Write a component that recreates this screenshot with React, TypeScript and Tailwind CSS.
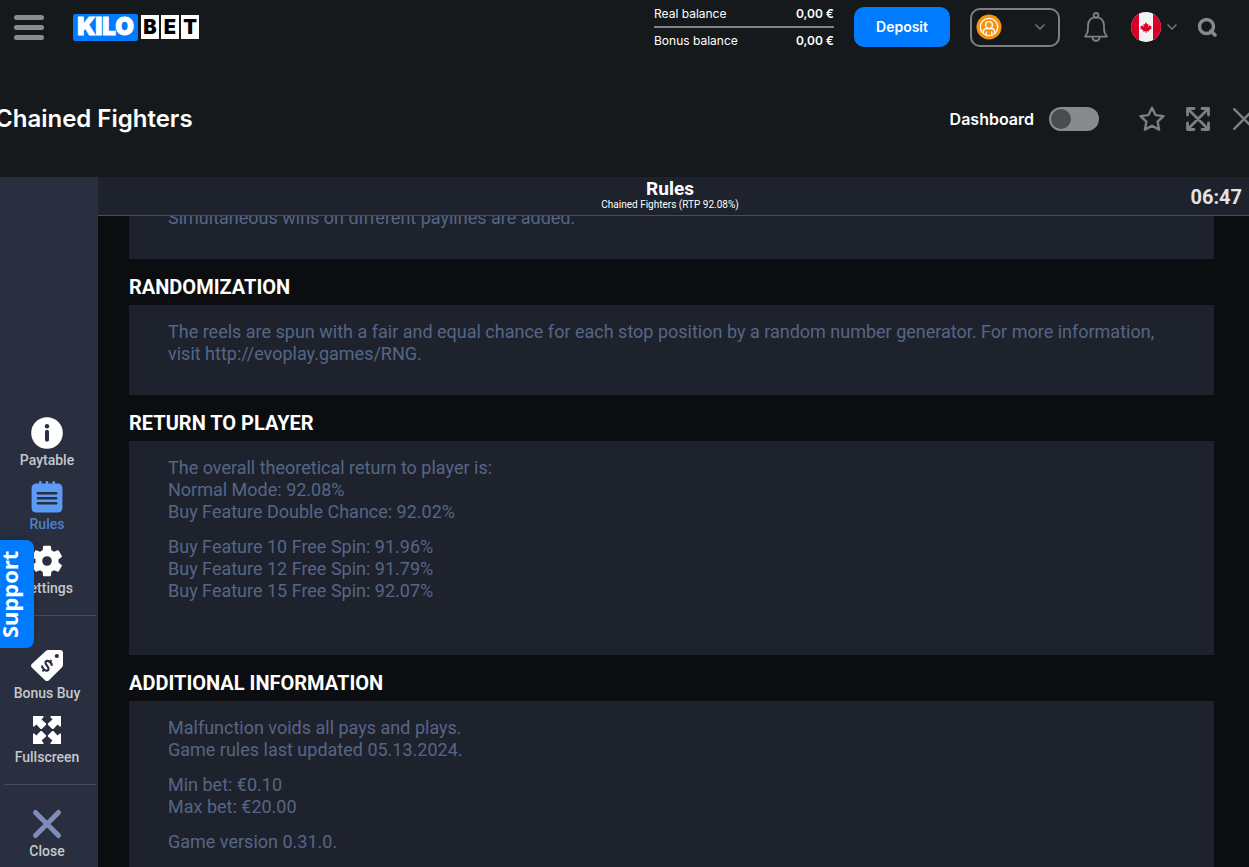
import { useState } from 'react';
import { ChevronDown } from 'lucide-react';

interface RuleSection {
  title: string;
  paragraphs: string[][];
  roomy?: boolean;
}

const SECTIONS: RuleSection[] = [
  {
    title: 'RANDOMIZATION',
    paragraphs: [
      [
        'The reels are spun with a fair and equal chance for each stop position by a random number generator. For more information,',
        'visit http://evoplay.games/RNG.',
      ],
    ],
  },
  {
    title: 'RETURN TO PLAYER',
    paragraphs: [
      [
        'The overall theoretical return to player is:',
        'Normal Mode: 92.08%',
        'Buy Feature Double Chance: 92.02%',
      ],
      [
        'Buy Feature 10 Free Spin: 91.96%',
        'Buy Feature 12 Free Spin: 91.79%',
        'Buy Feature 15 Free Spin: 92.07%',
      ],
    ],
    roomy: true,
  },
  {
    title: 'ADDITIONAL INFORMATION',
    paragraphs: [
      ['Malfunction voids all pays and plays.', 'Game rules last updated 05.13.2024.'],
      ['Min bet: €0.10', 'Max bet: €20.00'],
      ['Game version 0.31.0.'],
    ],
  },
];

function Logo() {
  return (
    <a href="#" aria-label="Kilobet" className="flex items-center gap-[3px] leading-none font-black">
      <span className="flex h-[27px] w-[65px] items-center justify-center rounded-[2px] bg-[#007bff] text-2xl leading-none text-white [-webkit-text-stroke:1px_white]">
        KILO
      </span>
      <span className="flex gap-[2px] text-xl leading-none text-black">
        {['B', 'E', 'T'].map(letter => (
          <span key={letter} className="flex h-6 w-[18px] items-center justify-center bg-white">
            {letter}
          </span>
        ))}
      </span>
    </a>
  );
}

function BellIcon() {
  return (
    <svg viewBox="0 0 24 30" className="h-[30px] w-6" fill="none" stroke="#7c8083" strokeWidth="1.8">
      <circle cx="12" cy="3.4" r="2.4" />
      <path d="M1 24.6c2-2.2 3-4.600 3-8V13.500c0-5 3.300-8.300 8-8.300s8 3.300 8 8.300v3.100c0 3.400 1 5.800 3 8z" strokeLinejoin="round" />
      <path d="M8.200 25c.4 2.500 1.800 3.800 3.800 3.800s3.400-1.300 3.800-3.800" />
    </svg>
  );
}

function UserIcon() {
  return (
    <svg viewBox="0 0 26 26" className="h-[26px] w-[26px]" fill="none" stroke="#fff" strokeWidth="1.3">
      <circle cx="13" cy="13" r="12.500" fill="#f7930f" stroke="none" />
      <circle cx="13" cy="13" r="8.700" />
      <circle cx="13" cy="11" r="3.400" />
      <path d="M7.300 19.300v-1.200c0-2 1.400-3.500 3.400-3.500h4.600c2 0 3.400 1.500 3.400 3.500v1.200M10.200 17.500v3.600M15.800 17.500v3.600" />
    </svg>
  );
}

function CanadaFlag() {
  return (
    <svg viewBox="0 0 30 30" className="h-[30px] w-[30px] rounded-full">
      <rect width="30" height="30" fill="#f2f2f2" />
      <rect width="8" height="30" fill="#d80027" />
      <rect x="22" width="8" height="30" fill="#d80027" />
      <path
        fill="#d80027"
        d="M15 10l1.300 2.400 1.300-.6-.5 3 1.800-1.600.4 1.100 1.400-.2-.7 1.600.9.600-3.200 2.200.3 1.100-2.600-.3V21h-.8v-1.700l-2.600.3.300-1.100-3.200-2.200.9-.6-.7-1.600 1.400.2.400-1.100 1.800 1.600-.5-3 1.300.6z"
      />
    </svg>
  );
}

function SearchIcon() {
  return (
    <svg viewBox="0 0 20 20" className="h-5 w-5" fill="none" stroke="#878a8d">
      <circle cx="9.500" cy="9.500" r="7" strokeWidth="3.400" />
      <path d="M14 14l4 4" strokeWidth="3.600" strokeLinecap="round" />
    </svg>
  );
}

function TopBar() {
  return (
    <header className="flex h-[54px] items-center justify-between pr-8 pl-[14px]">
      <div className="flex items-center gap-[29px]">
        <button type="button" aria-label="Menu" className="flex w-[30px] flex-col gap-[5px]">
          <span className="h-[5px] rounded-full bg-[#8a8c8f]" />
          <span className="h-[5px] rounded-full bg-[#8a8c8f]" />
          <span className="h-[5px] rounded-full bg-[#8a8c8f]" />
        </button>
        <Logo />
      </div>

      <div className="flex items-center">
        <dl className="w-[180px] pt-[2px] text-xs text-white">
          <div className="flex h-[26px] items-center justify-between border-b-2 border-[#7f8285]">
            <dt>Real balance</dt>
            <dd className="font-semibold">0,00 €</dd>
          </div>
          <div className="flex h-[26px] items-center justify-between">
            <dt>Bonus balance</dt>
            <dd className="font-semibold">0,00 €</dd>
          </div>
        </dl>
        <button type="button" className="ml-5 h-10 w-24 rounded-[10px] bg-[#007bff] text-sm font-semibold text-white">
          Deposit
        </button>
        <button
          type="button"
          aria-label="Account"
          className="ml-5 flex h-[39px] w-[90px] items-center justify-between rounded-[10px] border-2 border-[#7c8083] pr-[10px] pl-1"
        >
          <UserIcon />
          <ChevronDown className="h-4 w-4 text-[#6d7279]" strokeWidth={2.5} />
        </button>
        <button type="button" aria-label="Notifications" className="ml-6">
          <BellIcon />
        </button>
        <button type="button" aria-label="Language" className="ml-[23px] flex items-center gap-[3px]">
          <CanadaFlag />
          <ChevronDown className="h-4 w-4 text-[#6d7279]" strokeWidth={2.5} />
        </button>
        <button type="button" aria-label="Search" className="ml-[17px]">
          <SearchIcon />
        </button>
      </div>
    </header>
  );
}

function TitleBar() {
  const [dashboard, setDashboard] = useState(false);

  return (
    <div className="-mr-[6px] -ml-[5px] flex h-[123px] items-center justify-between pt-[7px]">
      <h1 className="text-2xl font-semibold text-white">Chained Fighters</h1>
      <div className="flex items-center text-[#7c8083]">
        <label className="flex cursor-pointer items-center gap-[15px] text-base font-semibold text-white">
          Dashboard
          <input
            type="checkbox"
            checked={dashboard}
            onChange={e => setDashboard(e.target.checked)}
            className="peer sr-only"
          />
          <span className="flex h-6 w-[50px] items-center rounded-full bg-[#888a8e] p-[2px] peer-checked:justify-end">
            <span className="h-5 w-5 rounded-full bg-[#4a4c50]" />
          </span>
        </label>
        <button type="button" aria-label="Favourite" className="ml-10">
          <svg viewBox="0 0 26 26" className="h-[26px] w-[26px]" fill="none" stroke="currentColor" strokeWidth="2.400" strokeLinejoin="round">
            <path d="M13 1.800l3.500 7.300 8 1-5.900 5.500 1.500 8L13 19.700l-7.100 3.900 1.500-8L1.500 10.100l8-1z" />
          </svg>
        </button>
        <button type="button" aria-label="Expand" className="ml-[21px]">
          <svg viewBox="0 0 24 24" className="h-6 w-6" fill="none" stroke="currentColor" strokeWidth="2.800" strokeLinecap="round" strokeLinejoin="round">
            <path d="M8 1.500H1.500V8M16 1.500h6.500V8M8 22.500H1.500V16M16 22.500h6.500V16M2 2l20 20M22 2L2 22" />
          </svg>
        </button>
        <button type="button" aria-label="Close game" className="ml-[23px]">
          <svg viewBox="0 0 22 22" className="h-[22px] w-[22px]" fill="none" stroke="currentColor" strokeWidth="2.400" strokeLinecap="round">
            <path d="M1.200 1.200l19.600 19.600M20.800 1.200L1.200 20.800" />
          </svg>
        </button>
      </div>
    </div>
  );
}

function InfoIcon() {
  return (
    <svg viewBox="0 0 32 32" className="h-8 w-8">
      <circle cx="16" cy="16" r="15.800" fill="#fff" />
      <circle cx="16" cy="9.300" r="2.200" fill="#292f3e" />
      <path d="M16 14.800v8" stroke="#292f3e" strokeWidth="4" strokeLinecap="round" />
    </svg>
  );
}

function RulesIcon() {
  return (
    <svg viewBox="0 0 32 32" className="h-8 w-8">
      <rect x=".6" y="2.500" width="30.800" height="29" rx="4.500" fill="#5b9bf5" />
      <path d="M9.300 1.300v3M16 1.300v3M22.700 1.300v3" stroke="#5b9bf5" strokeWidth="2.600" strokeLinecap="round" />
      <path d="M6.800 12.300h18.400M6.800 17.300h18.400M6.800 22.300h18.400" stroke="#292f3e" strokeWidth="2.500" strokeLinecap="round" />
    </svg>
  );
}

function GearIcon() {
  return (
    <svg viewBox="2 2 20 20" className="h-8 w-8" fill="#fff">
      <path d="M19.140 12.940c.04-.3.060-.61.060-.94 0-.32-.02-.64-.07-.94l2.030-1.580c.18-.14.230-.41.120-.61l-1.920-3.320c-.12-.22-.37-.29-.59-.22l-2.390.96c-.5-.38-1.030-.7-1.620-.94l-.36-2.540c-.04-.24-.24-.41-.48-.41h-3.840c-.24 0-.43.170-.47.410l-.36 2.540c-.59.240-1.130.570-1.620.940l-2.390-.96c-.22-.08-.47 0-.59.220L2.740 8.870c-.12.210-.08.470.120.610l2.030 1.580c-.05.300-.09.630-.09.940s.02.640.070.940l-2.030 1.580c-.18.140-.23.410-.12.610l1.920 3.320c.12.220.37.290.59.220l2.390-.96c.5.380 1.030.700 1.620.940l.36 2.540c.05.240.24.410.48.410h3.840c.24 0 .44-.17.470-.41l.36-2.540c.59-.24 1.130-.56 1.620-.94l2.390.96c.22.080.47 0 .59-.22l1.920-3.320c.12-.22.070-.47-.12-.61l-2.010-1.580zM12 15a3 3 0 1 1 0-6 3 3 0 0 1 0 6z" />
    </svg>
  );
}

function TagIcon() {
  return (
    <svg viewBox="0 0 32 32" className="h-8 w-8">
      <path fill="#fff" d="M14.500 1.200Q15.700 0 17.500 0H29q3 0 3 3v11.500q0 1.800-1.200 3L18 30.200q-2 1.800-4 0L1 17.800q-2-2 0-4z" />
      <circle cx="25.800" cy="6" r="2.100" fill="#292f3e" />
      <path
        d="M3.600-2.600C3-5.400-3.500-5.500-3.500-2.400-3.500.6 3.600-.6 3.600 2.500 3.600 5.500-3 5.500-3.700 2.700M0-7.200v2.600M0 4.600v2.600"
        transform="translate(16 15.700) rotate(38)"
        fill="none"
        stroke="#292f3e"
        strokeWidth="2.100"
      />
    </svg>
  );
}

function FullscreenIcon() {
  return (
    <svg viewBox="0 0 32 32" className="h-8 w-8" fill="#fff">
      {[0, 90, 180, 270].map(angle => (
        <path key={angle} transform={`rotate(${angle} 16 16)`} d="M2 2h10.500v1.200l-2 2.200 4.600 4.200v1.200l-4.300 4.300H9.600L5.400 10.500l-2.200 2H2z" />
      ))}
    </svg>
  );
}

function CloseIcon() {
  return (
    <svg viewBox="0 0 32 32" className="h-8 w-8" fill="none" stroke="#7d8cb8" strokeWidth="5" strokeLinecap="round">
      <path d="M4.500 4.500l23 23M27.500 4.500l-23 23" />
    </svg>
  );
}

interface MenuItemProps {
  label: string;
  icon: React.ReactNode;
  active?: boolean;
}

function MenuItem({ label, icon, active }: MenuItemProps) {
  return (
    <button
      type="button"
      className={`flex flex-col items-center gap-[3px] text-sm leading-4 font-medium ${active ? 'text-[#4d80c9]' : 'text-[#c6c8cd]'}`}
    >
      {icon}
      {label}
    </button>
  );
}

function Sidebar() {
  return (
    <nav className="flex w-[98px] shrink-0 flex-col justify-end bg-[#292f3e] pr-[2px] pb-2 pl-1">
      <div className="flex flex-col items-center gap-[13px] pr-[6px] pb-[19px]">
        <MenuItem label="Paytable" icon={<InfoIcon />} />
        <MenuItem label="Rules" icon={<RulesIcon />} active />
        <MenuItem label="Settings" icon={<GearIcon />} />
      </div>
      <div className="flex flex-col items-center gap-[13px] border-t border-[#3f4d66] pt-[34px] pr-[6px] pb-[19px]">
        <MenuItem label="Bonus Buy" icon={<TagIcon />} />
        <MenuItem label="Fullscreen" icon={<FullscreenIcon />} />
      </div>
      <div className="flex flex-col items-center border-t border-[#3f4d66] pt-[23px] pr-[6px]">
        <MenuItem label="Close" icon={<CloseIcon />} />
      </div>
    </nav>
  );
}

function RulesPage() {
  return (
    <main className="flex min-w-0 flex-1 flex-col bg-[#0b0d10]">
      <div className="grid h-[39px] shrink-0 grid-cols-[1fr_auto_1fr] items-center border-b border-[#424c60] bg-[#1e222c] pr-[7px]">
        <div className="col-start-2 pb-[3px] text-center text-white">
          <h2 className="text-[19px] leading-5 font-bold">Rules</h2>
          <p className="text-[10px] leading-3">Chained Fighters (RTP 92.08%)</p>
        </div>
        <time className="justify-self-end pt-[2px] text-xl font-bold text-[#e4e4e6]">06:47</time>
      </div>

      <div className="min-h-0 flex-1 overflow-hidden pr-[35px] pl-[31px] text-lg leading-[22px] text-[#566686]">
        <div className="-mt-[26px] bg-[#1e222c] pt-[17px] pr-8 pb-[30px] pl-[39px]">
          <p>Simultaneous wins on different paylines are added.</p>
        </div>
        {SECTIONS.map(section => (
          <section key={section.title}>
            <h3 className="flex h-[46px] items-center pt-[10px] text-xl font-bold text-white">{section.title}</h3>
            <div className={`space-y-[13px] bg-[#1e222c] pt-4 pr-8 pl-[39px] ${section.roomy ? 'pb-[53px]' : 'pb-[30px]'}`}>
              {section.paragraphs.map(lines => (
                <p key={lines[0]}>
                  {lines.map(line => (
                    <span key={line} className="block">{line}</span>
                  ))}
                </p>
              ))}
            </div>
          </section>
        ))}
      </div>
    </main>
  );
}

export default function App() {
  return (
    <div className="relative flex h-screen flex-col overflow-hidden bg-[#16191c] font-['Inter',sans-serif]">
      <TopBar />
      <TitleBar />
      <div className="flex min-h-0 flex-1 font-['Roboto',sans-serif]">
        <Sidebar />
        <RulesPage />
      </div>

      {/* Support tab sits over the game menu */}
      <button
        type="button"
        className="absolute bottom-[219px] left-0 flex h-[108px] w-[34px] rotate-180 items-center justify-center rounded-l-lg bg-[#007bff] pl-[17px] font-['Noto_Sans',sans-serif] text-[22px] leading-none font-bold text-white shadow-md [writing-mode:vertical-rl]"
      >
        Support
      </button>
    </div>
  );
}
